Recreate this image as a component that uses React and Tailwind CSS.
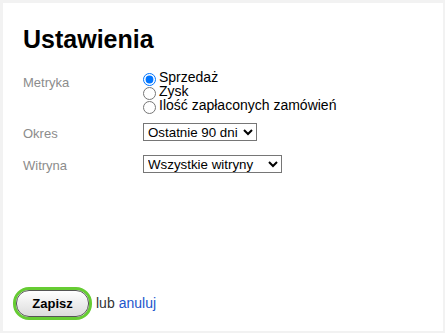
export default function App() {
  return (
    <div className="min-h-[333px] w-[445px] bg-[#f2f2f2] p-[3px] pr-[2px] pb-[2px] font-['Liberation_Sans',Arial,sans-serif]">
      <div className="flex h-[328px] flex-col bg-white pb-[11px]">
        <div className="pl-5 pt-6">
          <h1 className="text-[25px] font-bold leading-none text-black">Ustawienia</h1>
          <div className="mt-[18px] flex flex-col">
            <div className="flex">
              <div className="mt-[6px] w-[120px] text-[13px] leading-[13px] text-[#8c8c8c]">Metryka</div>
              <div className="flex flex-col text-[14px] text-black">
                <label className="flex h-[14px] items-start leading-[14px]">
                  <input type="radio" name="m" defaultChecked className="m-0 mr-[3px] mt-[3px] h-[13px] w-[13px]" />
                  <span>Sprzedaż</span>
                </label>
                <label className="flex h-[14px] items-start leading-[14px]">
                  <input type="radio" name="m" className="m-0 mr-[3px] mt-[3px] h-[13px] w-[13px]" />
                  <span>Zysk</span>
                </label>
                <label className="flex h-[14px] items-start leading-[14px]">
                  <input type="radio" name="m" className="m-0 mr-[3px] mt-[3px] h-[13px] w-[13px]" />
                  <span>Ilość zapłaconych zamówień</span>
                </label>
              </div>
            </div>
            <div className="mt-[11px] flex">
              <div className="mt-[4px] w-[120px] text-[13px] leading-[13px] text-[#8c8c8c]">Okres</div>
              <select className="h-[18px] w-[114px] border border-[#767676] bg-white text-[13.33px] text-black">
                <option>Ostatnie 90 dni</option>
              </select>
            </div>
            <div className="mt-[14px] flex">
              <div className="mt-[4px] w-[120px] text-[13px] leading-[13px] text-[#8c8c8c]">Witryna</div>
              <select className="h-[18px] w-[139px] border border-[#767676] bg-white text-[13.33px] text-black">
                <option>Wszystkie witryny</option>
              </select>
            </div>
          </div>
        </div>
        <div className="mt-auto flex items-center pl-[10px]">
          <span className="inline-flex rounded-[16px] border-[3px] border-[#66cc33]">
            <button className="h-[27px] w-[73px] rounded-[13px] border border-[#555] bg-gradient-to-b from-white to-[#dcdcdc] text-[13px] font-bold text-black">
              Zapisz
            </button>
          </span>
          <span className="ml-[4px] text-[14px] text-[#333]">lub </span>
          <a href="#" className="ml-[4px] text-[14px] text-[#2255cc]">anuluj</a>
        </div>
      </div>
    </div>
  );
}
